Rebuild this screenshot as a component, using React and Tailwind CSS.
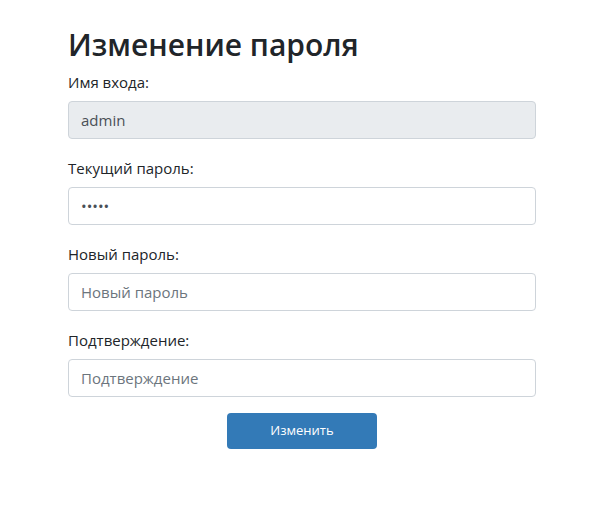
const fields = [
    { label: 'Имя входа:', value: 'admin', disabled: true },
    { label: 'Текущий пароль:', value: '12345', type: 'password' },
    { label: 'Новый пароль:', placeholder: 'Новый пароль', type: 'password' },
    { label: 'Подтверждение:', placeholder: 'Подтверждение', type: 'password' },
];

function Field({ label, value, placeholder, type = 'text', disabled }) {
    return (
        <div className="mb-[17px] flex flex-col">
            <label className="mb-[7px] text-[15px] leading-6">{label}</label>
            <input
                type={type}
                defaultValue={value}
                placeholder={placeholder}
                disabled={disabled}
                className={
                    'h-[38px] rounded border border-[#ced4da] px-3 text-[15px] text-[#495057] outline-none placeholder:text-[#6c757d] ' +
                    (disabled ? 'bg-[#e9ecef]' : 'bg-white')
                }
            />
        </div>
    );
}

export default function App() {
    return (
        <div className="min-h-[522px] bg-white pt-[26px] font-['Open_Sans',sans-serif] text-[#212529]">
            <div className="ml-[68px] flex w-[468px] flex-col">
                <h1 className="mb-[6px] text-[30px] font-semibold leading-[38px]">Изменение пароля</h1>
                {fields.map((f) => (
                    <Field key={f.label} {...f} />
                ))}
                <div className="-mt-px flex justify-center">
                    <button className="h-9 w-[150px] rounded bg-[#337ab7] text-[13px] text-white">Изменить</button>
                </div>
            </div>
        </div>
    );
}
